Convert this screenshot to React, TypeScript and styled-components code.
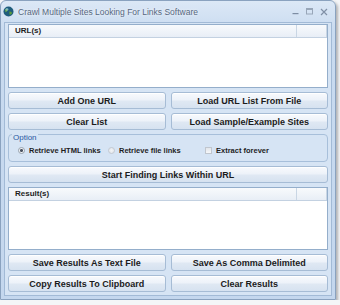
import React from "react"
import styled, { createGlobalStyle } from "styled-components"

const GlobalStyle = createGlobalStyle`
    html, body {
        margin: 0;
        padding: 0;
        background: #f4f5f7;
    }
    * {
        box-sizing: border-box;
    }
`

const Window = styled.div`
    width: 336px;
    border: 1px solid #8aa2bf;
    border-radius: 6px 6px 0 0;
    background: linear-gradient(#dce8f6, #c9dbf0 30px, #c4d7ee);
    box-shadow: 2px 2px 3px rgba(0, 0, 0, 0.28);
    font-family: "Liberation Sans", Arial, sans-serif;
`

const TitleBar = styled.div`
    height: 21px;
    display: flex;
    align-items: center;
    padding: 0 6px 0 2px;
    gap: 4px;
`

const TitleText = styled.div`
    flex: 1;
    font-size: 8.5px;
    color: #56677e;
    white-space: nowrap;
    text-shadow: 0 0 3px #ffffff;
`

const Controls = styled.div`
    display: flex;
    align-items: center;
    gap: 7px;
    margin-right: 1px;
`

const Client = styled.div`
    margin: 0 3px 3px;
    border: 1px solid #a2bad6;
    background: #d6e4f4;
    padding: 1px 3px 3px;
    display: flex;
    flex-direction: column;
    gap: 4px;
`

const ListBox = styled.div<{ $height: number }>`
    height: ${p => p.$height}px;
    border: 1px solid #94aecb;
    background: #ffffff;
`

const ListHeader = styled.div`
    height: 13px;
    display: flex;
    background: linear-gradient(#f8fafc, #e8eef6);
    border-bottom: 1px solid #c3d1e1;
`

const HeaderCell = styled.div<{ $width?: number }>`
    ${p => (p.$width ? `width: ${p.$width}px;` : "flex: 1;")}
    border-right: 1px solid #c9d6e4;
    padding-left: 6px;
    font-size: 8px;
    font-weight: bold;
    line-height: 12px;
    color: #1e1e1e;
`

const ButtonRow = styled.div`
    display: grid;
    grid-template-columns: 1fr 1fr;
    gap: 5px;
`

const Button = styled.button`
    height: 17px;
    padding: 0;
    border: 1px solid #a6bcd5;
    border-radius: 3px;
    background: linear-gradient(#f8fafd, #edf2f9 45%, #dfe8f3 55%, #d6e2f0);
    box-shadow: inset 0 1px 0 #ffffff;
    font-family: "Liberation Sans", Arial, sans-serif;
    font-size: 9px;
    font-weight: bold;
    color: #1b1b1b;
    white-space: nowrap;
`

const Group = styled.div`
    position: relative;
    height: 28px;
    border: 1px solid #a7bfda;
    border-radius: 4px;
    display: grid;
    grid-template-columns: 90px 87px auto;
    align-items: center;
    padding: 5px 0 0 9px;
`

const Legend = styled.span`
    position: absolute;
    top: -2px;
    left: 3px;
    padding: 0 1px;
    background: #d6e4f4;
    font-size: 8px;
    line-height: 9px;
    color: #2857a3;
`

const OptionItem = styled.label`
    display: flex;
    align-items: center;
    gap: 4px;
    font-size: 7.5px;
    font-weight: bold;
    color: #1e1e1e;
    white-space: nowrap;
`

const Radio = styled.span<{ $checked?: boolean }>`
    width: 7px;
    height: 7px;
    border-radius: 50%;
    border: 1px solid ${p => (p.$checked ? "#9aa3ae" : "#c3c9d1")};
    background: ${p =>
        p.$checked
            ? "radial-gradient(circle, #4a5260 0 1.3px, #eef1f4 1.6px)"
            : "radial-gradient(circle, #f2f4f6, #dde2e8)"};
`

const Check = styled.span`
    width: 7px;
    height: 7px;
    border: 1px solid #c0c6ce;
    background: linear-gradient(#e2e6eb, #f6f7f9);
    margin-left: 10px;
`

const AppIcon = () => (
    <svg width="11" height="11" viewBox="0 0 11 11">
        <circle cx="5.5" cy="5.5" r="5" fill="#1f5d7c" />
        <path d="M2 3.5 Q4 2 5 3.8 Q4.2 5.5 2.6 6.2 Z" fill="#6fb04a" />
        <path d="M6.3 5.5 Q8.5 5 9.2 7 Q8 9 6.5 8.6 Z" fill="#5a9c3c" />
        <circle cx="4" cy="3.3" r="1.4" fill="#9fd0e8" opacity="0.6" />
    </svg>
)

const WindowControls = () => (
    <Controls>
        <svg width="7" height="7" viewBox="0 0 7 7">
            <rect x="0.5" y="5" width="6" height="1.2" fill="#7d8da3" />
        </svg>
        <svg width="7" height="7" viewBox="0 0 7 7">
            <rect x="0.5" y="0.5" width="6" height="5.5" fill="none" stroke="#98a6b8" strokeWidth="1" />
            <rect x="0.5" y="0.5" width="6" height="1.5" fill="#98a6b8" />
        </svg>
        <svg width="8" height="8" viewBox="0 0 8 8">
            <path d="M1 1 L7 7 M7 1 L1 7" stroke="#8090a6" strokeWidth="1.2" />
        </svg>
    </Controls>
)

const ResultList = ({ title, height }: { title: string, height: number }) => (
    <ListBox $height={height}>
        <ListHeader>
            <HeaderCell>{title}</HeaderCell>
            <HeaderCell $width={30} />
        </ListHeader>
    </ListBox>
)

export default function App() {
    return (
        <>
            <GlobalStyle />
            <Window>
                <TitleBar>
                    <AppIcon />
                    <TitleText>Crawl Multiple Sites Looking For Links Software</TitleText>
                    <WindowControls />
                </TitleBar>
                <Client>
                    <ResultList title="URL(s)" height={64} />
                    <ButtonRow>
                        <Button>Add One URL</Button>
                        <Button>Load URL List From File</Button>
                    </ButtonRow>
                    <ButtonRow>
                        <Button>Clear List</Button>
                        <Button>Load Sample/Example Sites</Button>
                    </ButtonRow>
                    <Group>
                        <Legend>Option</Legend>
                        <OptionItem><Radio $checked />Retrieve HTML links</OptionItem>
                        <OptionItem><Radio />Retrieve file links</OptionItem>
                        <OptionItem><Check />Extract forever</OptionItem>
                    </Group>
                    <Button>Start Finding Links Within URL</Button>
                    <ResultList title="Result(s)" height={63} />
                    <ButtonRow>
                        <Button>Save Results As Text File</Button>
                        <Button>Save As Comma Delimited</Button>
                    </ButtonRow>
                    <ButtonRow>
                        <Button>Copy Results To Clipboard</Button>
                        <Button>Clear Results</Button>
                    </ButtonRow>
                </Client>
            </Window>
        </>
    )
}
